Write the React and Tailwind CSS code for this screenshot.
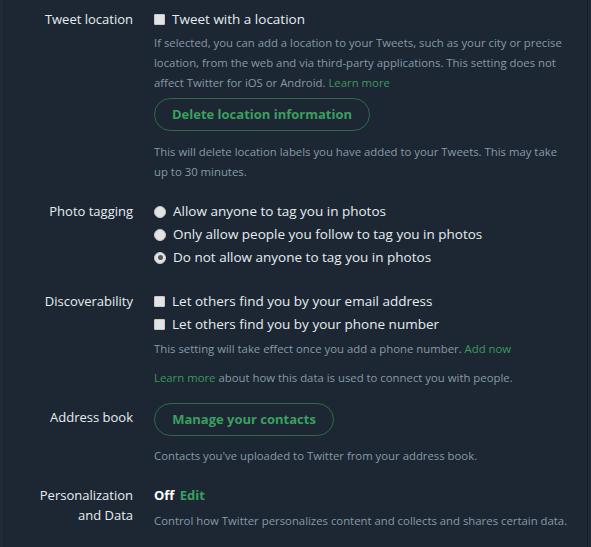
import React from "react";

const font = { fontFamily: '"Open Sans", "Noto Sans", sans-serif' };

function Check() {
  return <span className="inline-block w-[11px] h-[11px] bg-[#e3e3e3] border border-[#c8c8c8] rounded-[1px] shrink-0" />;
}
function Radio({ on }) {
  return (
    <span className="inline-flex items-center justify-center w-[12px] h-[12px] rounded-full bg-[#e3e3e3] border border-[#c8c8c8] shrink-0">
      {on && <span className="w-[5px] h-[5px] rounded-full bg-[#555]" />}
    </span>
  );
}

function Row({ label, children, className = "" }) {
  return (
    <div className={"grid grid-cols-[128px_1fr] gap-x-[21px] " + className}>
      <div className="text-right text-[13px] leading-[20px] text-[#e6ecf0]">{label}</div>
      <div>{children}</div>
    </div>
  );
}

const Opt = ({ icon, children }) => (
  <div className="flex items-center gap-[7px] h-[23px] text-[13.5px] text-[#e6ecf0]">
    {icon}
    <span>{children}</span>
  </div>
);

const desc = "text-[11.35px] leading-[20px] text-[#8899a6]";

export default function App() {
  return (
    <div style={font} className="w-[591px] h-[547px] bg-[#1c2733] flex overflow-hidden">
      <div className="w-[5px] bg-[#1f2a36] border-r border-[#17212b]" />
      <div className="flex-1 pt-[8px]">
        <Row label={<div className="pt-[1px]">Tweet location</div>}>
          <Opt icon={<Check />}>Tweet with a location</Opt>
          <p className={desc + " mt-[2px] pr-[20px]"}>
            If selected, you can add a location to your Tweets, such as your city or precise location, from the web and via third-party applications. This setting does not affect Twitter for iOS or Android. <span className="text-[#3b9a5a]">Learn more</span>
          </p>
          <button className="mt-[5px] h-[33px] w-[216px] rounded-full border border-[#2f6b47] text-[13px] font-bold text-[#3aa05e]">
            Delete location information
          </button>
          <p className={desc + " mt-[11px] pr-[20px]"}>
            This will delete location labels you have added to your Tweets. This may take up to 30 minutes.
          </p>
        </Row>
        <Row label={<div className="pt-[1px]">Photo tagging</div>} className="mt-[18px]">
          <Opt icon={<Radio />}>Allow anyone to tag you in photos</Opt>
          <Opt icon={<Radio />}>Only allow people you follow to tag you in photos</Opt>
          <Opt icon={<Radio on />}>Do not allow anyone to tag you in photos</Opt>
        </Row>
        <Row label={<div className="pt-[1px]">Discoverability</div>} className="mt-[21px]">
          <Opt icon={<Check />}>Let others find you by your email address</Opt>
          <Opt icon={<Check />}>Let others find you by your phone number</Opt>
          <p className={desc + " mt-[3px]"}>
            This setting will take effect once you add a phone number. <span className="text-[#3b9a5a]">Add now</span>
          </p>
          <p className={desc + " mt-[9px]"}>
            <span className="text-[#3b9a5a]">Learn more</span> about how this data is used to connect you with people.
          </p>
        </Row>
        <Row label={<div className="pt-[4px]">Address book</div>} className="mt-[15px]">
          <button className="h-[33px] w-[180px] rounded-full border border-[#2f6b47] text-[13px] font-bold text-[#3aa05e]">
            Manage your contacts
          </button>
          <p className={desc + " mt-[10px]"}>
            Contacts you've uploaded to Twitter from your address book.
          </p>
        </Row>
        <Row label={<div className="leading-[20px]">Personalization<br />and Data</div>} className="mt-[19px]">
          <div className="text-[13px] font-bold leading-[20px]">
            <span className="text-white">Off</span> <span className="ml-[2px] text-[#3aa05e]">Edit</span>
          </div>
          <p className={desc + " mt-[6px]"}>
            Control how Twitter personalizes content and collects and shares certain data.
          </p>
        </Row>
      </div>
      <div className="w-[4px] bg-[#1e2a36] border-l border-[#141d26]" />
    </div>
  );
}
